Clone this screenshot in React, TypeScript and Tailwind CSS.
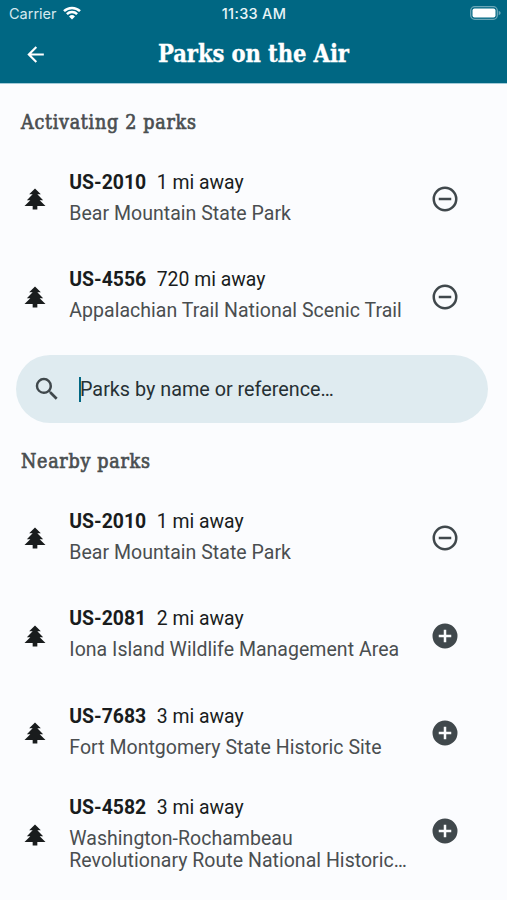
type Park = {
  reference: string;
  distance: string;
  lines: string[];
  selected: boolean;
};

const activating: Park[] = [
  { reference: "US-2010", distance: "1 mi away", lines: ["Bear Mountain State Park"], selected: true },
  { reference: "US-4556", distance: "720 mi away", lines: ["Appalachian Trail National Scenic Trail"], selected: true },
];

const nearby: Park[] = [
  { reference: "US-2010", distance: "1 mi away", lines: ["Bear Mountain State Park"], selected: true },
  { reference: "US-2081", distance: "2 mi away", lines: ["Iona Island Wildlife Management Area"], selected: false },
  { reference: "US-7683", distance: "3 mi away", lines: ["Fort Montgomery State Historic Site"], selected: false },
  { reference: "US-4582", distance: "3 mi away", lines: ["Washington-Rochambeau", "Revolutionary Route National Historic…"], selected: false },
];

function Icon({ d, className }: { d: string; className: string }) {
  return (
    <svg viewBox="0 0 24 24" fill="currentColor" className={`shrink-0 ${className}`}>
      <path d={d} />
    </svg>
  );
}

const TREE = "M10,21V18H3L8,13H5L10,8H7L12,3L17,8H14L19,13H16L21,18H14V21H10Z";
const MINUS =
  "M12,20C7.59,20 4,16.41 4,12C4,7.59 7.59,4 12,4C16.41,4 20,7.59 20,12C20,16.41 16.41,20 12,20M12,2A10,10 0 0,0 2,12A10,10 0 0,0 12,22A10,10 0 0,0 22,12A10,10 0 0,0 12,2M7,13H17V11H7";
const PLUS =
  "M17,13H13V17H11V13H7V11H11V7H13V11H17M12,2A10,10 0 0,0 2,12A10,10 0 0,0 12,22A10,10 0 0,0 22,12A10,10 0 0,0 12,2Z";
const SEARCH =
  "M9.5,3A6.5,6.5 0 0,1 16,9.5C16,11.11 15.41,12.59 14.44,13.73L14.71,14H15.5L20.5,19L19,20.5L14,15.5V14.71L13.73,14.44C12.59,15.41 11.11,16 9.5,16A6.5,6.5 0 0,1 3,9.5A6.5,6.5 0 0,1 9.5,3M9.5,5C7,5 5,7 5,9.5C5,12 7,14 9.5,14C12,14 14,12 14,9.5C14,7 12,5 9.5,5Z";
const BACK = "M20,11V13H8L13.5,18.5L12.08,19.92L4.16,12L12.08,4.08L13.5,5.5L8,11H20Z";

function ParkRow({ park }: { park: Park }) {
  const tall = park.lines.length > 1;
  return (
    <li className="flex h-[97.75px] items-center pl-[21px]">
      <Icon d={TREE} className={tall ? "mt-[7px] size-7 text-[#191c1d]" : "size-7 text-[#191c1d]"} />
      <div className={`ml-[20.3px] flex w-[363px] flex-col whitespace-nowrap ${tall ? "pt-[4px]" : "pb-[3.5px]"}`}>
        <div className="flex gap-[10.5px] pb-[7px] text-[19.4px] leading-[26px] text-[#191c1d]">
          <span className="font-bold">{park.reference}</span>
          <span>{park.distance}</span>
        </div>
        <div className="text-[19.5px] leading-[22px] tracking-[0.03px] text-[#4a4e50]">
          {park.lines.map((line) => (
            <div key={line}>{line}</div>
          ))}
        </div>
      </div>
      <Icon d={park.selected ? MINUS : PLUS} className="-ml-[2.3px] size-[30px] text-[#40484c]" />
    </li>
  );
}

function SectionTitle({ children }: { children: string }) {
  return (
    <h2 className="flex h-[66px] items-center pt-[12px] pl-[21px] font-['Roboto_Slab','DejaVu_Serif_Condensed','DejaVu_Serif',serif] text-[19.5px] tracking-[0.72px] text-[#4a4e50] [-webkit-text-stroke:0.65px_#4a4e50]">
      {children}
    </h2>
  );
}

export default function App() {
  return (
    <div className="h-[900px] w-[507px] overflow-hidden bg-[#fbfcfe] font-[Roboto,sans-serif]">
      <header className="flex h-[84px] flex-col border-b border-[#a3cbd8] bg-[#006783] text-white">
        <div className="grid h-[27px] grid-cols-3 items-center pr-[6px] pl-[9px] font-[Inter,sans-serif] text-[14.5px]">
          <div className="flex items-center gap-[6px]">
            <span className="text-[#d5e9ef]">Carrier</span>
            <svg viewBox="0 0 18 14" fill="none" stroke="currentColor" strokeWidth="2.5" className="-mt-[2px] h-[14px] w-[18px]">
              <path d="M1 5.2a11.4 11.4 0 0 1 16 0M3.9 8.2a7.2 7.2 0 0 1 10.2 0" />
              <path d="M9 13.6 6 10.5a4.3 4.3 0 0 1 6 0Z" fill="currentColor" stroke="none" />
            </svg>
          </div>
          <span className="-ml-[2px] pt-px text-center text-[14.5px] font-medium tracking-[0.3px] whitespace-nowrap text-[#e8f4f7]">
            11:33 AM
          </span>
          <svg viewBox="0 0 31 14" className="-mt-px h-[14px] w-[31px] justify-self-end">
            <rect x=".7" y=".7" width="26.6" height="12.6" rx="4" fill="none" stroke="#6ba7b8" strokeWidth="1.3" />
            <rect x="2.5" y="2.5" width="23" height="9" rx="2" fill="#fff" />
            <path d="M28.7 4.8q2 .7 2 2.2t-2 2.2Z" fill="#6ba7b8" />
          </svg>
        </div>
        <div className="grid h-[55px] grid-cols-[60px_1fr_60px] items-center">
          <Icon d={BACK} className="ml-[23px] size-[25px]" />
          <h1 className="pt-px text-center font-['Roboto_Slab','DejaVu_Serif_Condensed','DejaVu_Serif',serif] text-[23.5px] font-bold tracking-[-0.1px] whitespace-nowrap [-webkit-text-stroke:0.3px_#fff]">
            Parks on the Air
          </h1>
        </div>
      </header>
      <main>
        <SectionTitle>Activating 2 parks</SectionTitle>
        <ul>
          {activating.map((park) => (
            <ParkRow key={park.reference} park={park} />
          ))}
        </ul>
        <div className="mt-[9.5px] mr-[19px] mb-0 ml-[16px] flex h-[68px] items-center rounded-full bg-[#dfebf0] pl-[16px]">
          <Icon d={SEARCH} className="size-[30px] text-[#40484c]" />
          <div className="ml-[17px] h-[25px] w-[2px] bg-[#006783]" />
          <span className="-ml-px pt-[2px] text-[19.8px] text-[#263034]">Parks by name or reference…</span>
        </div>
        <SectionTitle>Nearby parks</SectionTitle>
        <ul>
          {nearby.map((park) => (
            <ParkRow key={park.reference} park={park} />
          ))}
        </ul>
      </main>
    </div>
  );
}
